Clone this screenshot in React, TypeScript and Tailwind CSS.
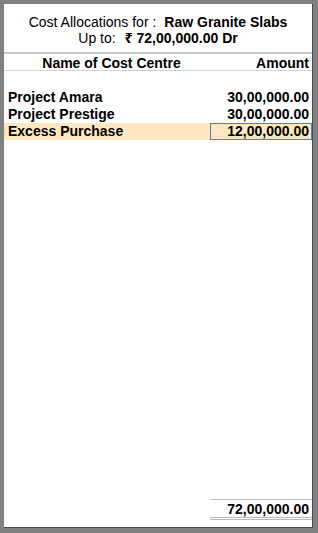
import * as React from "react"

interface Allocation {
  name: string
  amount: string
}

const allocations: Allocation[] = [
  { name: "Project Amara", amount: "30,00,000.00" },
  { name: "Project Prestige", amount: "30,00,000.00" },
  { name: "Excess Purchase", amount: "12,00,000.00" },
]

export default function App() {
  const selected = 2

  return (
    <main
      className="w-[318px] h-[533px] bg-[#808080] pt-[4px] pl-[4px] pr-[5px] pb-[5px] text-black"
      style={{ fontFamily: '"Liberation Sans", Arial, "Noto Sans", sans-serif' }}
    >
      <div className="flex flex-col h-full bg-white border-r border-b border-[#4a4a4a]">
        {/* Header */}
        <div className="pt-[10px] text-[14px] leading-[16px] text-center">
          <div>
            Cost Allocations for :<span className="ml-[8px] font-bold">Raw Granite Slabs</span>
          </div>
          <div>
            Up to:<span className="ml-[9px] font-bold">₹ 72,00,000.00 Dr</span>
          </div>
        </div>
        <div className="mt-[6px] h-[2px] bg-[#c8c8c8]" />

        {/* Column headings */}
        <div className="flex h-[17px] pt-[2px] items-center border-b border-[#d4d4d4] text-[14px] font-bold">
          <div className="w-[206px] pl-[9px] text-center">Name of Cost Centre</div>
          <div className="flex-1 text-right pr-[3px]">Amount</div>
        </div>

        {/* Rows */}
        <div className="pt-[18px]">
          {allocations.map((row, index) => (
            <div
              key={row.name}
              className={`flex h-[17px] items-center text-[14px] font-bold ${
                index === selected ? "bg-[#fde8c0]" : ""
              }`}
            >
              <div className="w-[206px] pl-[4px]">{row.name}</div>
              <div
                className={`flex-1 h-full flex items-center justify-end pr-[2px] border ${
                  index === selected ? "border-[#3a8ccd]" : "border-transparent"
                }`}
              >
                {row.amount}
              </div>
            </div>
          ))}
        </div>

        <div className="flex-1" />

        {/* Total */}
        <div className="ml-auto mb-[7px] w-[102px] h-[21px] flex items-center justify-end pr-[3px] pt-[1px] border-t border-b-[3px] border-double border-t-[#c0c0c0] border-b-[#b8b8b8] text-[14px] font-bold">
          72,00,000.00
        </div>
      </div>
    </main>
  )
}
